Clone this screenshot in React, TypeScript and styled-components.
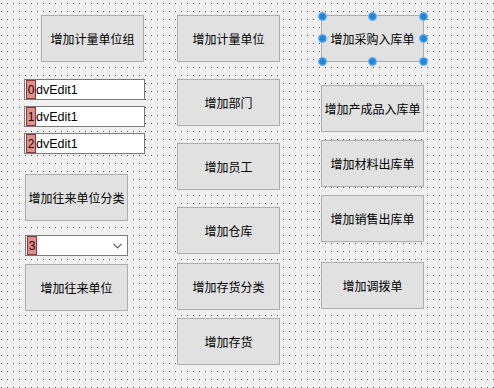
import React from 'react';
import styled, { createGlobalStyle } from 'styled-components';

const GlobalStyle = createGlobalStyle`
  html, body {
    margin: 0;
    padding: 0;
  }
  body {
    width: 494px;
    height: 388px;
    overflow: hidden;
  }
`;

const Canvas = styled.div`
  width: 494px;
  height: 388px;
  background-color: #f0f0f0;
  background-image:
    conic-gradient(from 270deg at 1px 1px, #4a4a4a 25%, transparent 0),
    conic-gradient(from 270deg at 2px 1px, #ffffff 25%, transparent 0);
  background-size: 6px 8px, 6px 8px;
  background-position: 1px 3px, 1px 3px;
  display: flex;
  align-items: flex-start;
  font-family: "Noto Sans CJK SC", "Liberation Sans", sans-serif;
  color: #000;
`;

const Column = styled.div<{ $left: number; $width: number }>`
  display: flex;
  flex-direction: column;
  align-items: flex-start;
  margin-left: ${(p) => p.$left}px;
  width: ${(p) => p.$width}px;
`;

const DesignButton = styled.div<{ $gap: number; $indent?: number }>`
  position: relative;
  box-sizing: border-box;
  width: 103px;
  height: 47px;
  margin-top: ${(p) => p.$gap}px;
  margin-left: ${(p) => p.$indent ?? 0}px;
  background: #e1e1e1;
  border: 1px solid #adadad;
  display: flex;
  align-items: center;
  justify-content: center;
  font-size: 12px;
  line-height: 1;
  white-space: nowrap;
`;

const Edit = styled.div<{ $gap: number; $width: number; $indent?: number }>`
  box-sizing: border-box;
  width: ${(p) => p.$width}px;
  height: 21px;
  margin-top: ${(p) => p.$gap}px;
  margin-left: ${(p) => p.$indent ?? 0}px;
  background: #fff;
  border: 1px solid #7a7a7a;
  display: flex;
  align-items: stretch;
  padding: 0 0 0 1px;
  font-family: "Liberation Sans", Arial, sans-serif;
  font-size: 12px;
`;

const Tag = styled.span`
  box-sizing: border-box;
  width: 10px;
  background: #dc9090;
  border: 1px solid #8e3434;
  display: flex;
  align-items: center;
  justify-content: center;
  font-size: 12px;
  color: #2a0000;
`;

const EditText = styled.span`
  display: flex;
  align-items: center;
  font-size: 12.5px;
  color: #000;
`;

const Chevron = styled.svg`
  margin-left: auto;
  margin-right: 5px;
  align-self: center;
`;

const Handle = styled.span<{ $x: string; $y: string }>`
  position: absolute;
  left: ${(p) => p.$x};
  top: ${(p) => p.$y};
  width: 9px;
  height: 9px;
  margin: -4.5px 0 0 -4.5px;
  border-radius: 50%;
  background: radial-gradient(circle, #1f86e0 0 40%, #6db4f0 65%, rgba(150, 200, 245, 0.35) 100%);
`;

const handleSpots: [string, string][] = [
  ['0%', '0%'],
  ['50%', '0%'],
  ['100%', '0%'],
  ['0%', '50%'],
  ['100%', '50%'],
  ['0%', '100%'],
  ['50%', '100%'],
  ['100%', '100%'],
];

const TextEdit = ({ gap, tag }: { gap: number; tag: string }) => (
  <Edit $gap={gap} $width={121}>
    <Tag>{tag}</Tag>
    <EditText>dvEdit1</EditText>
  </Edit>
);

export default function App() {
  return (
    <>
      <GlobalStyle />
      <Canvas>
        <Column $left={24} $width={121}>
          <DesignButton $gap={15} $indent={17}>增加计量单位组</DesignButton>
          <TextEdit gap={17} tag="0" />
          <TextEdit gap={6} tag="1" />
          <TextEdit gap={6} tag="2" />
          <DesignButton $gap={20} $indent={1}>增加往来单位分类</DesignButton>
          <Edit $gap={14} $width={103} $indent={1}>
            <Tag>3</Tag>
            <Chevron width="9" height="6" viewBox="0 0 9 6">
              <polyline points="0.5,0.8 4.5,4.8 8.5,0.8" fill="none" stroke="#5a5a5a" strokeWidth="1.2" />
            </Chevron>
          </Edit>
          <DesignButton $gap={8} $indent={1}>增加往来单位</DesignButton>
        </Column>

        <Column $left={32} $width={103}>
          <DesignButton $gap={15}>增加计量单位</DesignButton>
          <DesignButton $gap={17}>增加部门</DesignButton>
          <DesignButton $gap={17}>增加员工</DesignButton>
          <DesignButton $gap={17}>增加仓库</DesignButton>
          <DesignButton $gap={9}>增加存货分类</DesignButton>
          <DesignButton $gap={8}>增加存货</DesignButton>
        </Column>

        <Column $left={41} $width={103}>
          <DesignButton $gap={15}>
            增加采购入库单
            {handleSpots.map(([x, y]) => (
              <Handle key={x + y} $x={x} $y={y} />
            ))}
          </DesignButton>
          <DesignButton $gap={23}>增加产成品入库单</DesignButton>
          <DesignButton $gap={8}>增加材料出库单</DesignButton>
          <DesignButton $gap={8}>增加销售出库单</DesignButton>
          <DesignButton $gap={20}>增加调拨单</DesignButton>
        </Column>
      </Canvas>
    </>
  );
}
